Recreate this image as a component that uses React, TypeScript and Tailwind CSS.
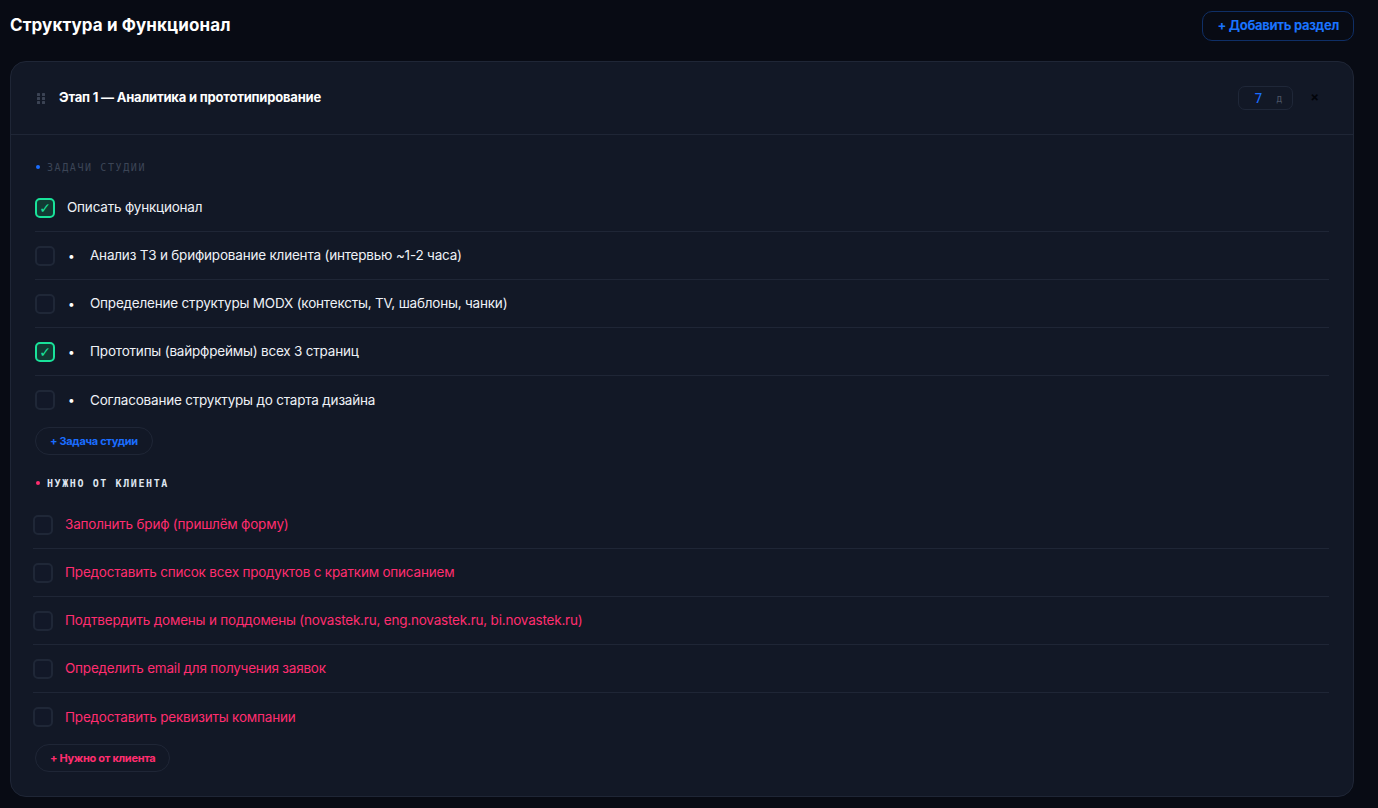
import React from "react";

const studio = [
  { text: "Описать функционал", done: true, bullet: false },
  { text: "Анализ ТЗ и брифирование клиента (интервью ~1-2 часа)", done: false, bullet: true },
  { text: "Определение структуры MODX (контексты, TV, шаблоны, чанки)", done: false, bullet: true },
  { text: "Прототипы (вайрфреймы) всех 3 страниц", done: true, bullet: true },
  { text: "Согласование структуры до старта дизайна", done: false, bullet: true },
];

const client = [
  "Заполнить бриф (пришлём форму)",
  "Предоставить список всех продуктов с кратким описанием",
  "Подтвердить домены и поддомены (novastek.ru, eng.novastek.ru, bi.novastek.ru)",
  "Определить email для получения заявок",
  "Предоставить реквизиты компании",
];

function Box({ done }: { done: boolean }) {
  return done ? (
    <div
      className="w-5 h-5 shrink-0 rounded-[5px] border-2 border-[#19e29a] bg-[#123a33] flex items-center justify-center text-[#19e29a] text-[14px] leading-none"
      style={{ fontFamily: "'DejaVu Sans', sans-serif" }}
    >
      ✓
    </div>
  ) : (
    <div className="w-5 h-5 shrink-0 rounded-[5px] border-2 border-[#1f2737] bg-[#121828]" />
  );
}

export default function App() {
  return (
    <div
      className="min-h-[808px] w-full bg-[#080b14] px-[10px] pt-[10px] pb-[11px]"
      style={{ fontFamily: "Inter, 'Noto Sans', sans-serif" }}
    >
      <div className="flex items-center justify-between h-[32px] mb-[19px]">
        <h1 className="text-[17px] font-bold text-white tracking-[0.1px]">Структура и Функционал</h1>
        <button className="mr-[14px] h-[30px] px-[14px] rounded-[10px] border border-[#0f2f66] text-[#1a73ff] text-[13px] font-bold tracking-[-0.3px]">
          + Добавить раздел
        </button>
      </div>

      <div className="rounded-[16px] border border-[#1f2636] bg-[#121826] mr-[14px]">
        <div className="flex items-center h-[73px] pl-[26px] pr-[34px] border-b border-[#1f2636]">
          <svg width="8" height="11" viewBox="0 0 8 11" className="mr-[14px]">
            {[0, 4, 8].map((y) =>
              [0, 5].map((x) => (
                <rect key={`${x}-${y}`} x={x} y={y} width="3" height="3" rx="0.5" fill="#3b4354" />
              ))
            )}
          </svg>
          <span className="text-[13px] font-bold text-white tracking-[-0.2px]">
            Этап 1 — Аналитика и прототипирование
          </span>
          <div className="ml-auto flex items-center">
            <div className="w-[55px] h-[24px] rounded-[7px] border border-[#1f2738] flex items-center pl-[15px] pr-[10px] justify-between">
              <span className="text-[14px] text-[#1a6dff]" style={{ fontFamily: "'DejaVu Sans Mono', monospace" }}>7</span>
              <span className="text-[10px] text-[#4b5465]" style={{ fontFamily: "'DejaVu Sans Mono', monospace" }}>д</span>
            </div>
            <span className="ml-[17px] text-[13px] text-[#02040a] font-bold">×</span>
          </div>
        </div>

        <div className="pl-[24px] pr-[24px] pt-[25px] pb-[24px]">
          <div className="flex items-center gap-[7px] ml-[1px] h-[14px]">
            <span className="w-[4px] h-[4px] rounded-full bg-[#1a6dff]" />
            <span
              className="text-[10px] tracking-[1.6px] text-[#3c4556]"
              style={{ fontFamily: "'DejaVu Sans Mono', monospace" }}
            >
              ЗАДАЧИ СТУДИИ
            </span>
          </div>
          <div className="mt-[10px]">
            {studio.map((t, i) => (
              <div
                key={i}
                className={`flex items-center h-[48px] ${i < studio.length - 1 ? "border-b border-[#1f2636]" : ""}`}
              >
                <Box done={t.done} />
                {t.bullet ? (
                  <>
                    <span className="ml-[13px] w-[22px] text-[12px] text-white">•</span>
                    <span className="text-[13.5px] text-[#eef1f6] tracking-[-0.2px]">{t.text}</span>
                  </>
                ) : (
                  <span className="ml-[12px] text-[13.5px] text-[#eef1f6] tracking-[-0.2px]">{t.text}</span>
                )}
              </div>
            ))}
          </div>
          <button className="mt-[3px] h-[28px] px-[14px] rounded-full border border-[#1f2636] text-[#1a6dff] text-[11px] font-bold tracking-[-0.3px]">
            + Задача студии
          </button>

          <div className="flex items-center gap-[7px] ml-[1px] mt-[21px] h-[14px]">
            <span className="w-[4px] h-[4px] rounded-full bg-[#ff2d6f]" />
            <span
              className="text-[10px] tracking-[1.6px] text-[#dfe5ef] font-bold"
              style={{ fontFamily: "'DejaVu Sans Mono', monospace" }}
            >
              НУЖНО ОТ КЛИЕНТА
            </span>
          </div>
          <div className="mt-[11px] -ml-[2px]">
            {client.map((t, i) => (
              <div
                key={i}
                className={`flex items-center h-[48px] ${i < client.length - 1 ? "border-b border-[#1f2636]" : ""}`}
              >
                <Box done={false} />
                <span className="ml-[12px] text-[13.5px] text-[#ff2d6f] tracking-[-0.2px]">{t}</span>
              </div>
            ))}
          </div>
          <button className="mt-[3px] h-[28px] px-[14px] rounded-full border border-[#1f2636] text-[#ff2d6f] text-[11px] font-bold tracking-[-0.3px]">
            + Нужно от клиента
          </button>
        </div>
      </div>
    </div>
  );
}
